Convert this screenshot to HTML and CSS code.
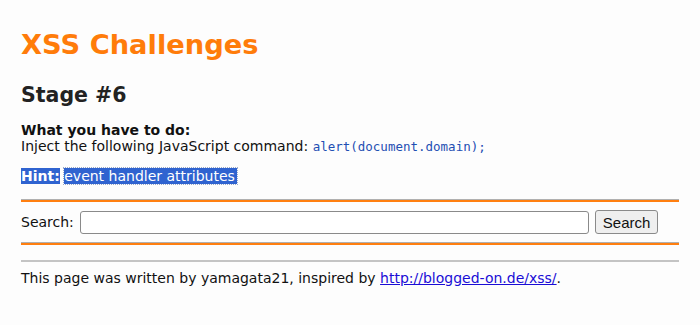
FILE: index.html
```html
<!DOCTYPE html>
<html lang="en">
<head>
    <meta charset="UTF-8">
    <title>XSS Challenges (by yamagata21) - Stage #6</title>
    <link rel="stylesheet" href="styles.css">
</head>
<body>
    <h1 class="title">XSS Challenges</h1>
    <h2 class="stage">Stage #6</h2>

    <div class="task">
        <b>What you have to do:</b><br>
        Inject the following JavaScript command: <code>alert(document.domain);</code>
    </div>

    <p class="hint"><span class="hint-label">Hint:</span> <span class="hint-text">event handler attributes</span></p>

    <hr class="rule">
    <form class="search">
        Search: <input type="text" class="search-input"> <button type="button" class="search-btn">Search</button>
    </form>
    <hr class="rule">

    <hr class="plain">
    <p class="footer">This page was written by yamagata21, inspired by <a href="#">http://blogged-on.de/xss/</a>.</p>
</body>
</html>
```

FILE: styles.css
```css
body {
    margin: 0;
    padding: 20px 21px;
    background: #fdfdfd;
    color: #111;
    font-family: 'DejaVu Sans', Verdana, sans-serif;
    font-size: 14px;
    line-height: 16px;
}

.title {
    margin: 9px 0 0;
    color: #ff7c0a;
    font-size: 27.3px;
    line-height: 32px;
}

.stage {
    margin: 21px 0 0;
    color: #222;
    font-size: 20.5px;
    line-height: 26px;
}

.task {
    margin-top: 14px;
}

code {
    font-family: 'DejaVu Sans Mono', monospace;
    font-size: 12.5px;
    color: #1f4fb3;
}

.hint {
    margin: 13px 0 0;
    line-height: 17px;
}

.hint-label,
.hint-text {
    background: #2f63d0;
    color: #fff;
}

.hint-label {
    font-weight: bold;
}

.hint-text {
    outline: 1px dotted #9aa9c8;
    padding-right: 2px;
}

.rule {
    margin: 14px 0 0;
    border: 0;
    border-top: 1px solid #b0b0b0;
    height: 2px;
    background: #ff7f10;
}

.search {
    display: flex;
    align-items: center;
    gap: 6px;
    margin: 8px 0 8px;
}

.search-input {
    width: 509px;
    height: 23px;
    margin: 0;
    padding: 0 4px;
    box-sizing: border-box;
    border: 1px solid #8a8a8a;
    border-radius: 3px;
    background: #fff;
}

.search-btn {
    height: 24px;
    padding: 0 7px;
    border: 1px solid #8a8a8a;
    border-radius: 3px;
    background: #efefef;
    color: #111;
    font-family: 'Liberation Sans', Arial, sans-serif;
    font-size: 15px;
}

.search + .rule {
    margin-top: 0;
}

.plain {
    margin: 15px 0 0;
    border: 0;
    border-top: 2px solid #c4c4c4;
}

.footer {
    margin: 8px 0 0;
}

.footer a {
    color: #1a0dd6;
}
```
